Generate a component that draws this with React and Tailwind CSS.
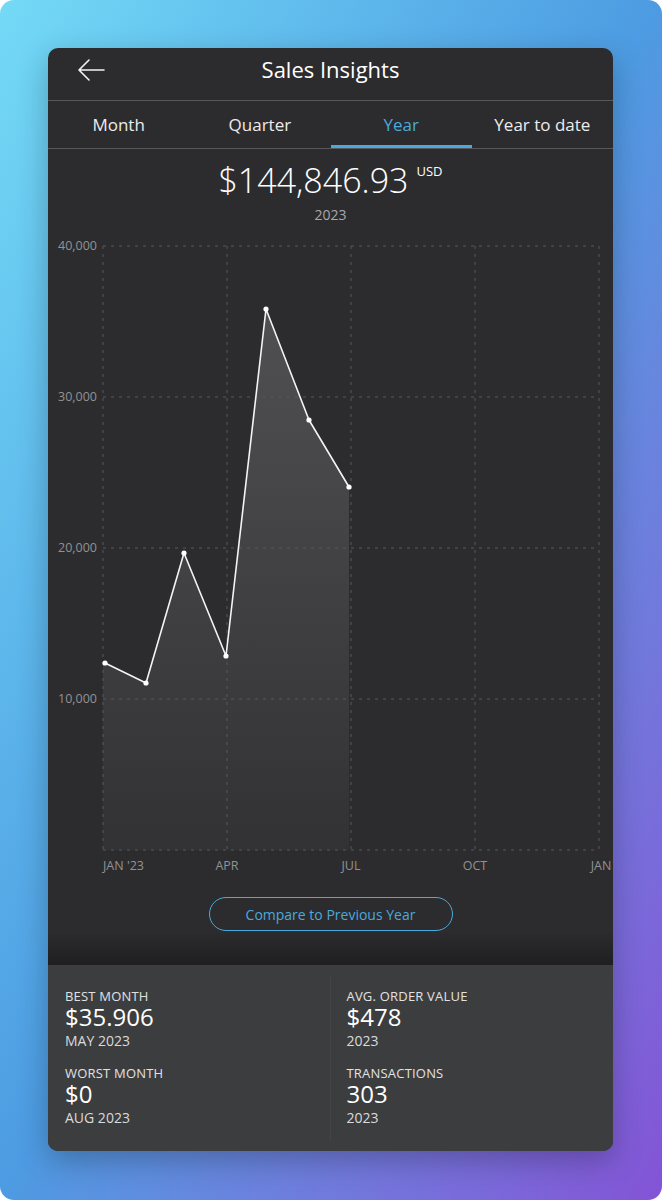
import React from "react";

// chart points in card coordinates (card left = 48px on page, svg top = 236px)
const POINTS = [
  [57, 427],
  [98, 447],
  [136, 317],
  [178, 420],
  [218, 73],
  [261, 184],
  [301, 251],
];

const BASE_Y = 614;
const GRID_X = [55, 179, 303, 427, 551];
const GRID_Y = [10, 161, 312, 463];
const Y_LABELS = ["40,000", "30,000", "20,000", "10,000"];

function SalesChart() {
  const line = POINTS.map((p) => p.join(",")).join(" ");
  const area = `55,${BASE_Y} 55,${POINTS[0][1]} ${line} ${POINTS[POINTS.length - 1][0]},${BASE_Y}`;

  return (
    <svg width="565" height="640" viewBox="0 0 565 640" className="block">
      <defs>
        <linearGradient id="fillGrad" x1="0" y1="0" x2="0" y2="1">
          <stop offset="0%" stopColor="#505052" />
          <stop offset="100%" stopColor="#323234" />
        </linearGradient>
      </defs>

      <polygon points={area} fill="url(#fillGrad)" />

      {/* grid */}
      {GRID_Y.map((y) => (
        <line key={y} x1="55" x2="551" y1={y} y2={y} stroke="#58585a" strokeWidth="1" strokeDasharray="3 5" />
      ))}
      <line x1="55" x2="551" y1={BASE_Y} y2={BASE_Y} stroke="#58585a" strokeWidth="1" strokeDasharray="3 5" />
      {GRID_X.map((x) => (
        <line key={x} x1={x} x2={x} y1="10" y2={BASE_Y} stroke="#58585a" strokeWidth="1" strokeDasharray="3 5" />
      ))}

      {/* y labels */}
      {Y_LABELS.map((t, i) => (
        <text key={t} x="49" y={GRID_Y[i] + 4} textAnchor="end" fill="#929294" fontSize="12.5" fontFamily="'Open Sans', sans-serif">
          {t}
        </text>
      ))}

      {/* x labels */}
      <text x="55" y="634" fill="#929294" fontSize="12.5" fontFamily="'Open Sans', sans-serif">JAN '23</text>
      <text x="179" y="634" textAnchor="middle" fill="#929294" fontSize="12.5" fontFamily="'Open Sans', sans-serif">APR</text>
      <text x="303" y="634" textAnchor="middle" fill="#929294" fontSize="12.5" fontFamily="'Open Sans', sans-serif">JUL</text>
      <text x="427" y="634" textAnchor="middle" fill="#929294" fontSize="12.5" fontFamily="'Open Sans', sans-serif">OCT</text>
      <text x="553" y="634" textAnchor="middle" fill="#929294" fontSize="12.5" fontFamily="'Open Sans', sans-serif">JAN</text>

      <polyline points={line} fill="none" stroke="#f4f4f4" strokeWidth="1.6" strokeLinejoin="round" />
      {POINTS.map(([x, y]) => (
        <circle key={x} cx={x} cy={y} r="2.6" fill="#ffffff" />
      ))}
    </svg>
  );
}

function Stat({ label, value, sub }) {
  return (
    <div className="flex flex-col">
      <span className="text-[13px] leading-[18px] text-[#e2e2e2] tracking-[0.2px]">{label}</span>
      <span className="text-[24px] leading-[24px] text-white">{value}</span>
      <span className="mt-[3px] text-[14px] leading-[18px] text-[#dadada]">{sub}</span>
    </div>
  );
}

export default function App() {
  const tabs = ["Month", "Quarter", "Year", "Year to date"];

  return (
    <div
      className="w-[662px] h-[1200px] rounded-[14px] overflow-hidden bg-gradient-to-br from-[#74daf6] via-[#4d9be2] to-[#8353d6] pt-[48px] pl-[48px]"
      style={{ fontFamily: "'Open Sans', 'Noto Sans', sans-serif" }}
    >
      <div className="w-[565px] h-[1103px] rounded-[10px] overflow-hidden bg-[#2c2c2e] flex flex-col shadow-[0_10px_30px_rgba(0,0,0,0.25)]">
        {/* header */}
        <div className="relative h-[53px] flex items-center justify-center border-b border-[#58585a] pb-[9px]">
          <svg className="absolute left-[29px] top-[11px]" width="28" height="22" viewBox="0 0 28 22" fill="none">
            <path d="M2 11H27M12 1L2 11L12 21" stroke="#f2f2f2" strokeWidth="1.6" strokeLinecap="round" strokeLinejoin="round" />
          </svg>
          <h1 className="text-[22px] text-white">Sales Insights</h1>
        </div>

        {/* tabs */}
        <div className="grid grid-cols-4 h-[48px] border-b border-[#58585a]">
          {tabs.map((t) => (
            <div
              key={t}
              className={`flex items-center justify-center text-[17px] ${
                t === "Year" ? "text-[#4ba9dc] border-b-[3px] border-[#4ba9dc] pt-[3px]" : "text-[#ececec]"
              }`}
            >
              {t}
            </div>
          ))}
        </div>

        {/* total */}
        <div className="flex flex-col items-center pt-[9px]">
          <div className="flex items-start">
            <span className="text-[34px] leading-[44px] font-light text-white">$144,846.93</span>
            <span className="ml-[8px] mt-[6px] text-[13px] leading-[14px] text-white">USD</span>
          </div>
          <span className="mt-[4px] text-[14px] leading-[18px] text-[#a8a8aa]">2023</span>
        </div>

        {/* chart */}
        <div className="mt-[12px]">
          <SalesChart />
        </div>

        <div className="flex justify-center mt-[21px]">
          <button className="w-[244px] h-[34px] rounded-full border-[1.5px] border-[#4ba9dc] text-[14px] text-[#4ba9dc]">
            Compare to Previous Year
          </button>
        </div>

        <div className="h-[34px] bg-gradient-to-b from-[#2c2c2e] to-[#1f1f21]" />

        {/* stats */}
        <div className="flex-1 bg-[#3c3d3f] grid grid-cols-2 py-[10px]">
          <div className="flex flex-col gap-[14px] pl-[17px] pt-[12px] border-r border-[#444547]">
            <Stat label="BEST MONTH" value="$35.906" sub="MAY 2023" />
            <Stat label="WORST MONTH" value="$0" sub="AUG 2023" />
          </div>
          <div className="flex flex-col gap-[14px] pl-[16px] pt-[12px]">
            <Stat label="AVG. ORDER VALUE" value="$478" sub="2023" />
            <Stat label="TRANSACTIONS" value="303" sub="2023" />
          </div>
        </div>
      </div>
    </div>
  );
}
